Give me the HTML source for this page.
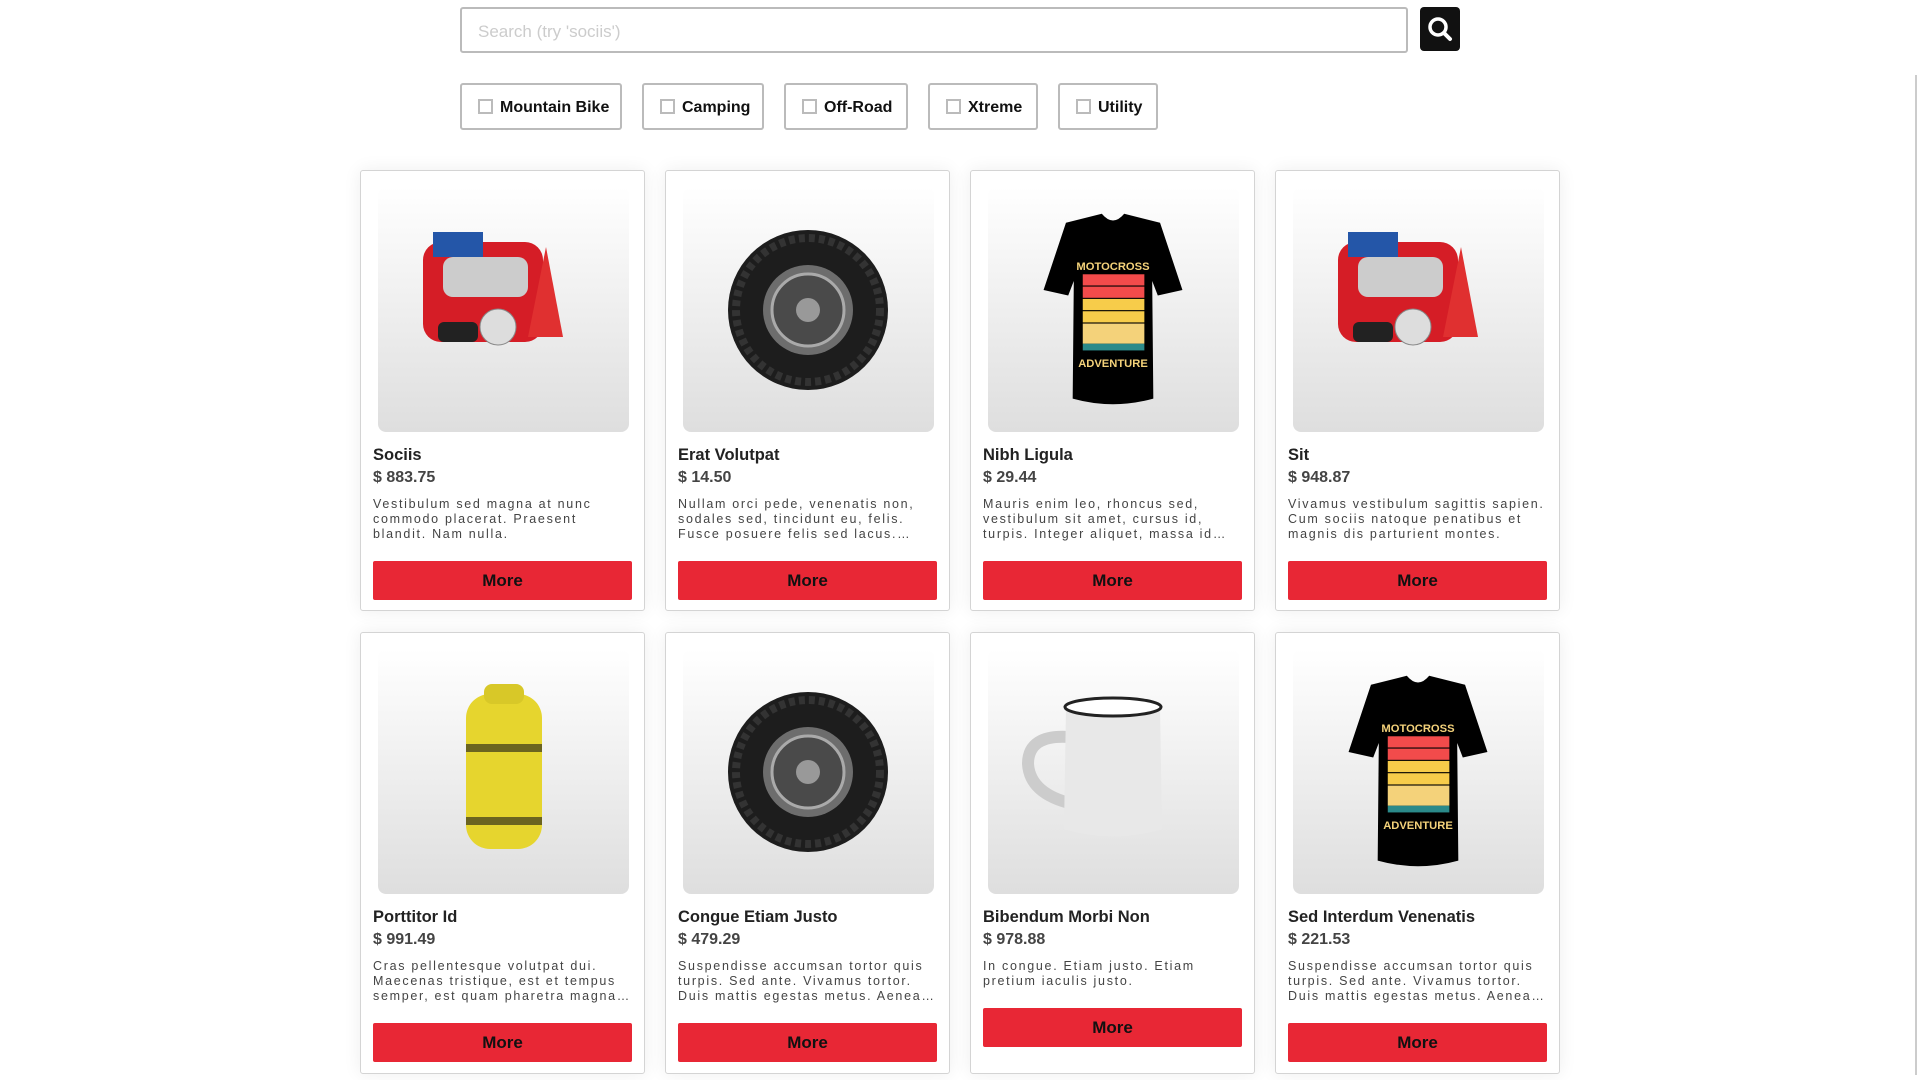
<!DOCTYPE html>
<html><head><meta charset="utf-8"><style>
*{box-sizing:border-box;margin:0;padding:0}
body{width:1920px;height:1080px;overflow:hidden;background:#fff;font-family:"Liberation Sans",Arial,sans-serif;position:relative}
.search{position:absolute;left:460px;top:7px;width:948px;height:46px;border:2px solid #bbb;border-radius:3px;font-size:17px;color:#ccc;padding:13px 16px}
.sbtn{position:absolute;left:1420px;top:7px;width:40px;height:44px;background:#111;border-radius:4px}
.f{position:absolute;top:83px;height:47px;border:2px solid #bbb;border-radius:3px;font-weight:bold;font-size:16px;color:#111;padding:14px 0 0 16px}
.f i{display:inline-block;width:15px;height:15px;border:2px solid #bbb;vertical-align:-2px;margin-right:7px}
.card{position:absolute;width:285px;border:1px solid #d4d4d4;border-radius:3px;background:#fff;box-shadow:0 0 18px rgba(0,0,0,.07)}
.img{position:absolute;left:17px;top:16px;width:251px;height:245px;border-radius:8px;background:linear-gradient(#fff,#dedede);overflow:hidden}
.t{position:absolute;left:12px;top:275px;font-weight:bold;font-size:16.5px;color:#222}
.p{position:absolute;left:12px;top:298px;font-weight:bold;font-size:16px;color:#444}
.d{position:absolute;left:12px;top:326px;width:259px;font-size:12.5px;line-height:15px;letter-spacing:1.7px;color:#444;overflow:hidden;display:-webkit-box;-webkit-line-clamp:3;-webkit-box-orient:vertical}
.b{position:absolute;left:12px;width:259px;height:39px;background:#e82735;border-radius:2px;text-align:center;font-weight:bold;font-size:17px;line-height:39px;color:#111}
.sb{position:absolute;left:1915px;top:75px;width:2px;height:1000px;background:#ccc}
</style></head><body>
<div class="search">Search (try 'sociis')</div>
<div class="sbtn"><svg width="40" height="44" viewBox="0 0 40 44"><circle cx="18" cy="20" r="8" fill="none" stroke="#fff" stroke-width="3.5"/><line x1="24" y1="26" x2="30" y2="32" stroke="#fff" stroke-width="4" stroke-linecap="round"/></svg></div>
<div class="f" style="left:460px;width:162px"><i></i>Mountain Bike</div>
<div class="f" style="left:642px;width:122px"><i></i>Camping</div>
<div class="f" style="left:784px;width:124px"><i></i>Off-Road</div>
<div class="f" style="left:928px;width:110px"><i></i>Xtreme</div>
<div class="f" style="left:1058px;width:100px"><i></i>Utility</div>
<div class="sb"></div>

<svg width="0" height="0" style="position:absolute"><defs>
<g id="kit"><rect x="45" y="55" width="120" height="100" rx="18" fill="#d51d26"/><rect x="65" y="70" width="85" height="40" rx="10" fill="#ccc"/><polygon points="150,150 185,150 168,60" fill="#e03030"/><rect x="55" y="45" width="50" height="25" fill="#2456a8"/><circle cx="120" cy="140" r="18" fill="#ddd" stroke="#888"/><rect x="60" y="135" width="40" height="20" rx="6" fill="#222"/></g>
<g id="tire"><circle cx="125" cy="123" r="80" fill="#1d1d1d"/><circle cx="125" cy="123" r="72" fill="none" stroke="#333" stroke-width="8" stroke-dasharray="6 4"/><circle cx="125" cy="123" r="45" fill="#6d6d6d"/><circle cx="125" cy="123" r="36" fill="#4a4a4a" stroke="#aaa" stroke-width="3"/><circle cx="125" cy="123" r="12" fill="#999"/></g>
<g id="shirt"><g transform="translate(125 122) scale(1.12) translate(-125 -115)"><path d="M83 38 L115 30 Q125 42 135 30 L167 38 L187 98 L165 103 L160 90 L161 195 Q125 205 89 195 L90 90 L85 103 L63 98 Z" fill="#000"/><text x="125" y="80" fill="#f4d27a" font-size="10" font-weight="bold" text-anchor="middle" font-family="Liberation Sans">MOTOCROSS</text><rect x="98" y="84" width="55" height="10" fill="#f24b4b"/><rect x="98" y="95" width="55" height="10" fill="#f24b4b"/><rect x="98" y="106" width="55" height="10" fill="#f7cc4a"/><rect x="98" y="117" width="55" height="10" fill="#f7cc4a"/><rect x="98" y="128" width="55" height="18" fill="#f4d27a"/><rect x="98" y="146" width="55" height="6" fill="#2b8a8a"/><text x="125" y="167" fill="#f4d27a" font-size="10" font-weight="bold" text-anchor="middle" font-family="Liberation Sans">ADVENTURE</text></g></g>
</defs></svg>

<div class="card" style="left:360px;top:170px;height:441px"><div class="img"><svg width="251" height="245"><use href="#kit"/></svg></div><div class="t">Sociis</div><div class="p">$ 883.75</div><div class="d">Vestibulum sed magna at nunc commodo placerat. Praesent blandit. Nam nulla.</div><div class="b" style="top:390px">More</div></div>
<div class="card" style="left:665px;top:170px;height:441px"><div class="img"><svg width="251" height="245"><use href="#tire"/></svg></div><div class="t">Erat Volutpat</div><div class="p">$ 14.50</div><div class="d">Nullam orci pede, venenatis non, sodales sed, tincidunt eu, felis. Fusce posuere felis sed lacus. Morbi sem mauris.</div><div class="b" style="top:390px">More</div></div>
<div class="card" style="left:970px;top:170px;height:441px"><div class="img"><svg width="251" height="245"><use href="#shirt"/></svg></div><div class="t">Nibh Ligula</div><div class="p">$ 29.44</div><div class="d">Mauris enim leo, rhoncus sed, vestibulum sit amet, cursus id, turpis. Integer aliquet, massa id lobortis convallis.</div><div class="b" style="top:390px">More</div></div>
<div class="card" style="left:1275px;top:170px;height:441px"><div class="img"><svg width="251" height="245"><use href="#kit"/></svg></div><div class="t">Sit</div><div class="p">$ 948.87</div><div class="d">Vivamus vestibulum sagittis sapien. Cum sociis natoque penatibus et magnis dis parturient montes.</div><div class="b" style="top:390px">More</div></div>

<div class="card" style="left:360px;top:632px;height:442px"><div class="img"><svg width="251" height="245"><rect x="88" y="45" width="76" height="155" rx="24" fill="#e6d52e"/><rect x="88" y="95" width="76" height="8" fill="#6b6420"/><rect x="88" y="168" width="76" height="8" fill="#6b6420"/><rect x="106" y="35" width="40" height="20" rx="8" fill="#d8c828"/></svg></div><div class="t">Porttitor Id</div><div class="p">$ 991.49</div><div class="d">Cras pellentesque volutpat dui. Maecenas tristique, est et tempus semper, est quam pharetra magna, ac consequat metus.</div><div class="b" style="top:390px">More</div></div>
<div class="card" style="left:665px;top:632px;height:442px"><div class="img"><svg width="251" height="245"><use href="#tire"/></svg></div><div class="t">Congue Etiam Justo</div><div class="p">$ 479.29</div><div class="d">Suspendisse accumsan tortor quis turpis. Sed ante. Vivamus tortor. Duis mattis egestas metus. Aenean fermentum.</div><div class="b" style="top:390px">More</div></div>
<div class="card" style="left:970px;top:632px;height:442px"><div class="img"><svg width="251" height="245"><path d="M82 88 Q40 85 40 115 Q42 145 85 155" fill="none" stroke="#ccc" stroke-width="12"/><path d="M78 58 L76 180 Q125 195 174 180 L172 58 Z" fill="#e8e8e8"/><ellipse cx="125" cy="58" rx="48" ry="9" fill="#fff" stroke="#222" stroke-width="3"/></svg></div><div class="t">Bibendum Morbi Non</div><div class="p">$ 978.88</div><div class="d">In congue. Etiam justo. Etiam pretium iaculis justo.</div><div class="b" style="top:375px">More</div></div>
<div class="card" style="left:1275px;top:632px;height:442px"><div class="img"><svg width="251" height="245"><use href="#shirt"/></svg></div><div class="t">Sed Interdum Venenatis</div><div class="p">$ 221.53</div><div class="d">Suspendisse accumsan tortor quis turpis. Sed ante. Vivamus tortor. Duis mattis egestas metus. Aenean fermentum.</div><div class="b" style="top:390px">More</div></div>
</body></html>
